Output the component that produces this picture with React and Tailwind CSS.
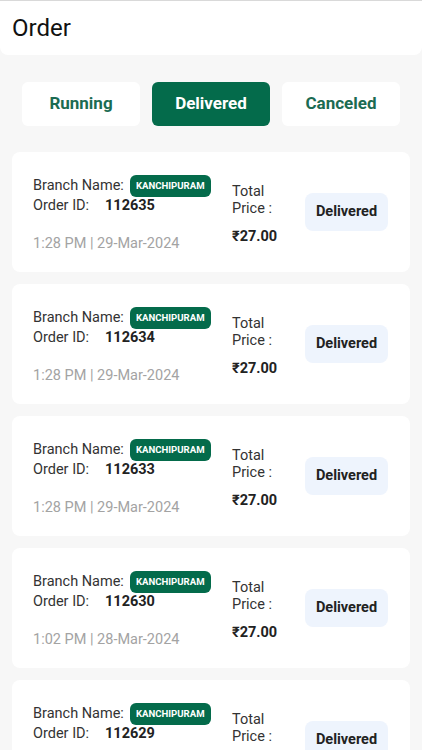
const orders = [
  { id: "112635", time: "1:28 PM | 29-Mar-2024" },
  { id: "112634", time: "1:28 PM | 29-Mar-2024" },
  { id: "112633", time: "1:28 PM | 29-Mar-2024" },
  { id: "112630", time: "1:02 PM | 28-Mar-2024" },
  { id: "112629", time: "1:02 PM | 28-Mar-2024" },
];

const tabs = ["Running", "Delivered", "Canceled"];

function OrderCard({ order }) {
  return (
    <div className="flex h-[120px] shrink-0 items-center rounded-lg bg-white pl-[21px] pt-1">
      <div className="w-[199px]">
        <div className="flex h-[22px] items-center">
          <span className="text-[14.5px] text-[#333333]">Branch Name:</span>
          <span className="ml-[6px] flex h-[22px] items-center rounded-md bg-[#046b4b] px-[6px] text-[9.6px] font-bold text-white">
            KANCHIPURAM
          </span>
        </div>
        <div className="flex h-[18px] items-center">
          <span className="w-[72px] text-[14.5px] text-[#333333]">Order ID:</span>
          <span className="text-[14.5px] font-bold text-[#222222]">{order.id}</span>
        </div>
        <div className="mt-[20px] text-[14.5px] leading-[18px] text-[#a3a3a3]">{order.time}</div>
      </div>
      <div className="w-[73px] text-[14.5px] leading-[17px] text-[#333333]">
        <div>Total</div>
        <div>Price :</div>
        <div className="mt-[11px] font-bold text-[#222222]">₹27.00</div>
      </div>
      <div className="-mt-1 flex h-[38px] w-[83px] items-center justify-center rounded-lg bg-[#eef4fd] text-[14.5px] font-bold text-[#222222]">
        Delivered
      </div>
    </div>
  );
}

export default function App() {
  return (
    <div className="flex h-[750px] flex-col overflow-hidden bg-[#f7f7f7] font-['Roboto',sans-serif]">
      <div className="h-px shrink-0 bg-[#d9d9d9]" />
      <header className="flex h-[54px] shrink-0 items-center rounded-b-lg bg-white px-3">
        <h1 className="text-[24px] text-[#111111]">Order</h1>
      </header>

      <div className="mt-[27px] flex shrink-0 gap-3 px-[22px]">
        {tabs.map((tab) => (
          <button
            key={tab}
            className={
              tab === "Delivered"
                ? "flex h-[44px] w-[118px] items-center justify-center rounded-md bg-[#046b4b] text-[17px] font-bold text-white"
                : "flex h-[44px] w-[118px] items-center justify-center rounded-md bg-white text-[17px] font-bold text-[#1b6b52]"
            }
          >
            {tab}
          </button>
        ))}
      </div>

      <div className="mt-[26px] flex flex-col gap-3 px-3">
        {orders.map((order) => (
          <OrderCard key={order.id} order={order} />
        ))}
      </div>
    </div>
  );
}
